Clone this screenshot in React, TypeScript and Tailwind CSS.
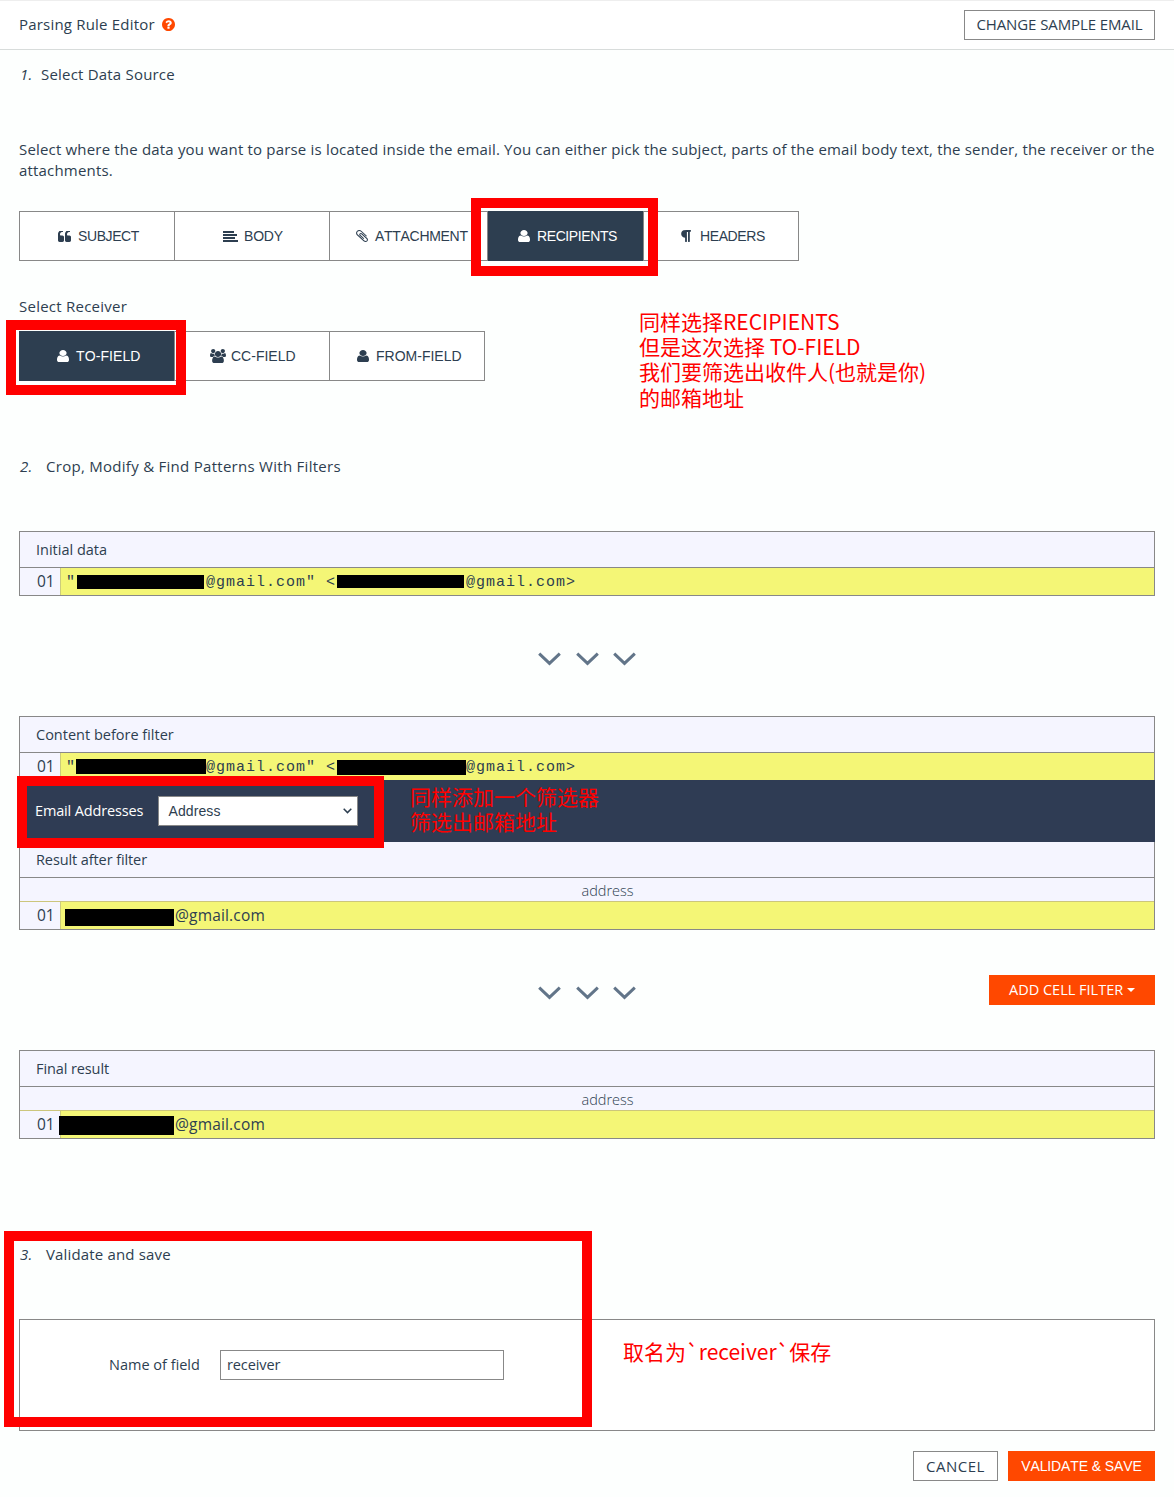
import type { ReactNode } from "react";

const PATHS = {
  quote:
    "M832 960v384q0 80-56 136t-136 56h-384q-80 0-136-56t-56-136v-704q0-104 40.5-198.5t109.5-163.5 163.5-109.5 198.5-40.5h64q26 0 45 19t19 45v128q0 26-19 45t-45 19h-64q-106 0-181 75t-75 181v32q0 40 28 68t68 28h224q80 0 136 56t56 136zm896 0v384q0 80-56 136t-136 56h-384q-80 0-136-56t-56-136v-704q0-104 40.5-198.5t109.5-163.5 163.5-109.5 198.5-40.5h64q26 0 45 19t19 45v128q0 26-19 45t-45 19h-64q-106 0-181 75t-75 181v32q0 40 28 68t68 28h224q80 0 136 56t56 136z",
  clip:
    "M1596 1385q0 117-79 196t-196 79q-135 0-235-100l-777-776q-113-115-113-271 0-159 110-270t269-111q158 0 273 113l605 606q10 10 10 22 0 16-30.5 46.5t-46.5 30.5q-13 0-23-10l-606-607q-79-77-181-77-106 0-179 75t-73 181q0 105 76 181l776 777q63 63 145 63 64 0 106-42t42-106q0-82-63-145l-581-581q-26-24-60-24-29 0-48 19t-19 48q0 32 25 59l410 410q10 10 10 22 0 16-31 47t-47 31q-12 0-22-10l-410-410q-63-61-63-149 0-82 57-139t139-57q88 0 149 63l581 581q100 98 100 235z",
  user:
    "M1536 1399q0 109-62.5 187t-150.5 78h-854q-88 0-150.5-78t-62.5-187q0-85 8.5-160.5t31.5-152 58.5-131 94-89 134.5-34.5q131 128 313 128t313-128q76 0 134.5 34.5t94 89 58.5 131 31.5 152 8.5 160.5zm-256-887q0 159-112.5 271.5t-271.5 112.5-271.5-112.5-112.5-271.5 112.5-271.5 271.5-112.5 271.5 112.5 112.5 271.5z",
  users:
    "M593 896q-162 5-265 128h-134q-82 0-138-40.5t-56-118.5q0-353 124-353 6 0 43.5 21t97.5 42.5 119 21.5q67 0 133-23-5 37-5 66 0 139 81 256zm1071 637q0 120-73 189.5t-194 69.5h-874q-121 0-194-69.5t-73-189.5q0-53 3.5-103.5t14-109 26.5-108.5 43-97.5 62-81 85.5-53.5 111.5-20q10 0 43 21.5t73 48 107 48 135 21.5 135-21.5 107-48 73-48 43-21.5q61 0 111.5 20t85.5 53.5 62 81 43 97.5 26.5 108.5 14 109 3.5 103.5zm-1024-1277q0 106-75 181t-181 75-181-75-75-181 75-181 181-75 181 75 75 181zm704 384q0 159-112.5 271.5t-271.5 112.5-271.5-112.5-112.5-271.5 112.5-271.5 271.5-112.5 271.5 112.5 112.5 271.5zm576 225q0 78-56 118.5t-138 40.5h-134q-103-123-265-128 81-117 81-256 0-29-5-66 66 23 133 23 59 0 119-21.5t97.5-42.5 43.5-21q124 0 124 353zm-128-609q0 106-75 181t-181 75-181-75-75-181 75-181 181-75 181 75 75 181z",
  paragraph:
    "M1534 189v73q0 29-18.5 61t-42.5 32q-50 0-54 1-26 6-32 31-3 11-3 64v1152q0 25-18 43t-43 18h-108q-25 0-43-18t-18-43v-1218h-143v1218q0 25-17.5 43t-43.5 18h-108q-26 0-43.5-18t-17.5-43v-496q-147-12-245-59-126-58-192-179-64-117-64-259 0-166 88-286 88-118 209-159 111-37 417-37h479q25 0 43 18t18 43z",
  question:
    "M1024 1376v-192q0-14-9-23t-23-9h-192q-14 0-23 9t-9 23v192q0 14 9 23t23 9h192q14 0 23-9t9-23zm256-672q0-88-55.5-163t-138.5-116-170-41q-243 0-371 213-15 24 8 42l132 100q7 6 19 6 16 0 25-12 53-68 86-92 34-24 86-24 48 0 85.5 26t37.5 59q0 38-20 61t-68 45q-63 28-115.5 86.5t-52.5 125.5v36q0 14 9 23t23 9h192q14 0 23-9t9-23q0-19 21.5-49.5t54.5-49.5q32-18 49-28.5t46-35 44.5-48 28-60.5 12.5-81zm384 192q0 209-103 385.5t-279.5 279.5-385.5 103-385.5-103-279.5-279.5-103-385.5 103-385.5 279.5-279.5 385.5-103 385.5 103 279.5 279.5 103 385.5z",
};

function Icon({ name, viewBox, className }: { name: keyof typeof PATHS; viewBox: string; className: string }) {
  return (
    <svg
      viewBox={viewBox}
      preserveAspectRatio="none"
      className={`shrink-0 ${className}`}
      fill="currentColor"
      aria-hidden="true"
    >
      <path d={PATHS[name]} />
    </svg>
  );
}

function AlignIcon() {
  return (
    <svg width="15" height="11" viewBox="0 0 15 11" fill="currentColor" className="mr-[6px] shrink-0" aria-hidden="true">
      <path d="M0 0h11v2H0zM0 3h14v2H0zM0 6h12v2H0zM0 9h15v2H0z" />
    </svg>
  );
}

function Tab({ active, className, children }: { active?: boolean; className: string; children: ReactNode }) {
  return (
    <button
      className={`flex h-[50px] items-center border-r border-[#888] font-['Liberation_Sans',sans-serif] text-[14px] [font-kerning:none] ${
        active ? "bg-[#2d3e50] text-white" : "border-y bg-white text-[#2d3e50]"
      } ${className}`}
    >
      {children}
    </button>
  );
}

function TabText({ children }: { children: ReactNode }) {
  return <span className="pt-px">{children}</span>;
}

function StepHeading({ n, gap, className, children }: { n: string; gap: string; className: string; children: ReactNode }) {
  return (
    <h2 className={`flex h-[22px] items-center pl-px text-[15px] ${className}`}>
      <span className={`italic ${gap}`}>{n}</span>
      <span>{children}</span>
    </h2>
  );
}

function PanelTitle({ children }: { children: ReactNode }) {
  return <div className="flex h-9 items-center border-b border-[#888] pl-4 text-[14.5px]">{children}</div>;
}

function Row({ className = "", children }: { className?: string; children: ReactNode }) {
  return (
    <div className="flex h-[27px] bg-[#f4f676]">
      <div className="flex w-[41px] shrink-0 items-center border-r border-[#cccc7c] bg-[#f5f5ff] pl-[17px] text-[15.5px]">
        01
      </div>
      <div className={`flex flex-1 items-center ${className}`}>{children}</div>
    </div>
  );
}

function ColumnHeader() {
  return (
    <div className="flex h-6 items-center justify-center border-b border-[#ccc67c] pt-0.5 pl-[41px] text-[14.5px] font-light">
      address
    </div>
  );
}

function Arrows() {
  return (
    <div className="flex w-[98px] justify-between text-[#627589]">
      {[0, 1, 2].map((i) => (
        <svg key={i} width="23" height="14" viewBox="0 0 23 14" fill="none" stroke="currentColor" strokeWidth="3">
          <path d="M1.2 1.6L11.5 11.4L21.8 1.6" />
        </svg>
      ))}
    </div>
  );
}

function MonoRow({ first, second }: { first: string; second: string }) {
  return (
    <Row className="pl-[5px] font-['Liberation_Mono',monospace] text-[15px] tracking-[1px]">
      <span className="w-2.5 pt-[3px]">"</span>
      <span className="flex w-[130px] justify-start">
        <span className={`bg-black ${first}`} />
      </span>
      <span className="pt-[3px] whitespace-pre">{'@gmail.com" <'}</span>
      <span className="flex w-[130px] justify-start">
        <span className={`bg-black ${second}`} />
      </span>
      <span className="pt-[3px]">@gmail.com&gt;</span>
    </Row>
  );
}

export default function App() {
  return (
    <div className="relative h-[1497px] w-[1174px] overflow-hidden bg-[#fdfffe] font-['Open_Sans',sans-serif] text-[#2d3e50]">
      <header className="flex h-[50px] items-center justify-between border-t border-b border-t-[#eee] border-b-[#d8dcdb] bg-white px-[19px]">
        <div className="flex items-center pb-0.5">
          <h1 className="text-[15px] tracking-[0.2px]">Parsing Rule Editor</h1>
          <Icon name="question" viewBox="128 128 1536 1536" className="ml-[7px] size-[13px] text-[#ff4800]" />
        </div>
        <button className="h-[30px] w-[191px] border border-[#888] bg-white pb-0.5 text-[15px] tracking-[-0.1px]">
          CHANGE SAMPLE EMAIL
        </button>
      </header>

      <main className="px-[19px]">
        <StepHeading n="1." gap="w-[21px]" className="mt-[13px] tracking-[0.2px]">
          Select Data Source
        </StepHeading>
        <p className="mt-[54px] text-[15px] leading-[21px] tracking-[0.18px]">
          <span className="whitespace-nowrap">
            Select where the data you want to parse is located inside the email. You can either pick the subject, parts of
            the email body text, the sender, the receiver or the
          </span>
          <br />
          attachments.
        </p>

        <div className="mt-[30px] flex">
          <Tab className="w-[156px] border-l pl-[38px] tracking-[-0.4px]">
            <Icon name="quote" viewBox="64 256 1664 1280" className="mr-[7px] h-[11px] w-[13px]" />
            <TabText>SUBJECT</TabText>
          </Tab>
          <Tab className="w-[155px] pl-[48px] tracking-[-0.2px]">
            <AlignIcon />
            <TabText>BODY</TabText>
          </Tab>
          <Tab className="w-[158px] pl-[26px] tracking-[-0.3px]">
            <Icon name="clip" viewBox="192 128 1408 1536" className="mr-[7px] h-[12px] w-[12px]" />
            <TabText>ATTACHMENT</TabText>
          </Tab>
          <Tab active className="w-[156px] pl-[30px] tracking-[-0.4px]">
            <Icon name="user" viewBox="256 128 1280 1536" className="mr-[7px] h-[12px] w-[12px]" />
            <TabText>RECIPIENTS</TabText>
          </Tab>
          <Tab className="w-[155px] pl-[37px] tracking-[-0.4px]">
            <Icon name="paragraph" viewBox="256 128 1280 1536" className="mr-[9px] h-[12px] w-[10px]" />
            <TabText>HEADERS</TabText>
          </Tab>
        </div>

        <div className="mt-[34px] flex h-[22px] items-center text-[15px] tracking-[0.24px]">Select Receiver</div>
        <div className="mt-[14px] flex">
          <Tab active className="w-[156px] pl-[38px] tracking-[0.1px]">
            <Icon name="user" viewBox="256 128 1280 1536" className="mr-[7px] h-[12px] w-[12px]" />
            <TabText>TO-FIELD</TabText>
          </Tab>
          <Tab className="w-[155px] pl-[35px]">
            <Icon name="users" viewBox="0 0 1920 1792" className="mr-[5px] h-[14px] w-[16px]" />
            <TabText>CC-FIELD</TabText>
          </Tab>
          <Tab className="w-[155px] pl-[27px]">
            <Icon name="user" viewBox="256 128 1280 1536" className="mr-[7px] h-[12px] w-[12px]" />
            <TabText>FROM-FIELD</TabText>
          </Tab>
        </div>

        <StepHeading n="2." gap="w-[26px]" className="mt-[74px] tracking-[0.28px]">
          Crop, Modify &amp; Find Patterns With Filters
        </StepHeading>

        <section className="mt-[54px] border border-[#888] bg-[#f5f5ff]">
          <PanelTitle>Initial data</PanelTitle>
          <MonoRow first="ml-px h-3.5 w-[127px]" second="ml-px -mt-px h-[13px] w-[127px]" />
        </section>

        <div className="flex h-[120px] items-center justify-center pt-1.5">
          <Arrows />
        </div>

        <section>
          <div className="border border-b-0 border-[#888] bg-[#f5f5ff]">
            <PanelTitle>Content before filter</PanelTitle>
            <MonoRow first="h-[15px] w-[130px]" second="ml-px mt-0.5 h-[15px] w-[129px]" />
          </div>
          <div className="flex h-[62px] items-center bg-[#2f3c54] pl-4">
            <span className="w-[123px] text-[14.5px] tracking-[-0.15px] text-white">Email Addresses</span>
            <div className="flex h-[30px] w-[200px] items-center justify-between border border-[#888] bg-white pr-[5px] pl-[9.5px] font-['Liberation_Sans',sans-serif] text-[14px]">
              <span className="tracking-[0.1px]">Address</span>
              <svg width="9" height="6" viewBox="0 0 9 6" fill="none" stroke="currentColor" strokeWidth="1.5">
                <path d="M0.7 0.8L4.5 4.6L8.3 0.8" />
              </svg>
            </div>
          </div>
          <div className="border border-t-0 border-[#888] bg-[#f5f5ff]">
            <PanelTitle>
              <span className="tracking-[-0.1px]">Result after filter</span>
            </PanelTitle>
            <ColumnHeader />
            <Row className="pl-[4px] text-[15.5px] tracking-[0.17px]">
              <span className="mt-[3px] mr-px h-[17px] w-[109px] bg-black" />
              <span>@gmail.com</span>
            </Row>
          </div>
        </section>

        <div className="mt-[45px] grid h-[30px] grid-cols-[1fr_98px_1fr] items-center">
          <div className="col-start-2 pt-1.5">
            <Arrows />
          </div>
          <button className="flex h-[30px] w-[166px] items-center justify-self-end bg-[#ff4800] pl-5 text-[14.5px] text-white">
            ADD CELL FILTER
            <svg width="8" height="4" viewBox="0 0 8 4" fill="currentColor" className="ml-1">
              <path d="M0 0h8L4 4z" />
            </svg>
          </button>
        </div>

        <section className="mt-[45px] border border-[#888] bg-[#f5f5ff]">
          <PanelTitle>
            <span className="tracking-[-0.1px]">Final result</span>
          </PanelTitle>
          <ColumnHeader />
          <Row className="text-[15.5px] tracking-[0.17px]">
            <span className="relative mt-[2px] -ml-[2px] mr-px h-[19px] w-[115px] bg-black" />
            <span>@gmail.com</span>
          </Row>
        </section>

        <StepHeading n="3." gap="w-[26px]" className="mt-[104px] tracking-[0.16px]">
          Validate and save
        </StepHeading>

        <section className="mt-[54px] flex h-[112px] items-start border border-[#888] bg-white pt-[30px] pl-[89px]">
          <label className="flex h-[30px] w-[111px] items-center text-[14.5px]">Name of field</label>
          <div className="flex h-[30px] w-[284px] items-center border border-[#888] bg-white pl-1.5 text-[14.5px] tracking-[-0.1px]">
            receiver
          </div>
        </section>

        <div className="mt-5 flex justify-end gap-2.5">
          <button className="h-[30px] w-[85px] border border-[#888] bg-white pt-px text-[15px] tracking-[0.5px]">
            CANCEL
          </button>
          <button className="h-[30px] w-[147px] bg-[#ff4800] pt-px font-['Liberation_Sans',sans-serif] text-[14px] tracking-[-0.1px] text-white [font-kerning:none]">
            VALIDATE &amp; SAVE
          </button>
        </div>
      </main>

      {/* Red annotation frames and notes laid over the page */}
      <div className="absolute top-[198px] left-[471px] h-[78px] w-[187px] border-10 border-[#f00]" />
      <div className="absolute top-[320px] left-[6px] h-[75px] w-[180px] border-10 border-[#f00]" />
      <div className="absolute top-[776px] left-[17px] h-[72px] w-[367px] border-10 border-[#f00]" />
      <div className="absolute top-[1231px] left-[4px] h-[196px] w-[588px] border-10 border-[#f00]" />
      <div className="absolute top-[309px] left-[639px] font-['Noto_Sans_CJK_SC',sans-serif] text-[21px] leading-[25.2px] whitespace-nowrap text-[#f00]">
        同样选择RECIPIENTS
        <br />
        但是这次选择 TO-FIELD
        <br />
        我们要筛选出收件人(也就是你)
        <br />
        的邮箱地址
      </div>
      <div className="absolute top-[784px] left-[410px] font-['Noto_Sans_CJK_SC',sans-serif] text-[21px] leading-[25.2px] whitespace-nowrap text-[#f00]">
        同样添加一个筛选器
        <br />
        筛选出邮箱地址
      </div>
      <div className="absolute top-[1339px] left-[623px] font-['Noto_Sans_CJK_SC',sans-serif] text-[21px] leading-[25.2px] whitespace-nowrap text-[#f00]">
        取名为`receiver`保存
      </div>
    </div>
  );
}
